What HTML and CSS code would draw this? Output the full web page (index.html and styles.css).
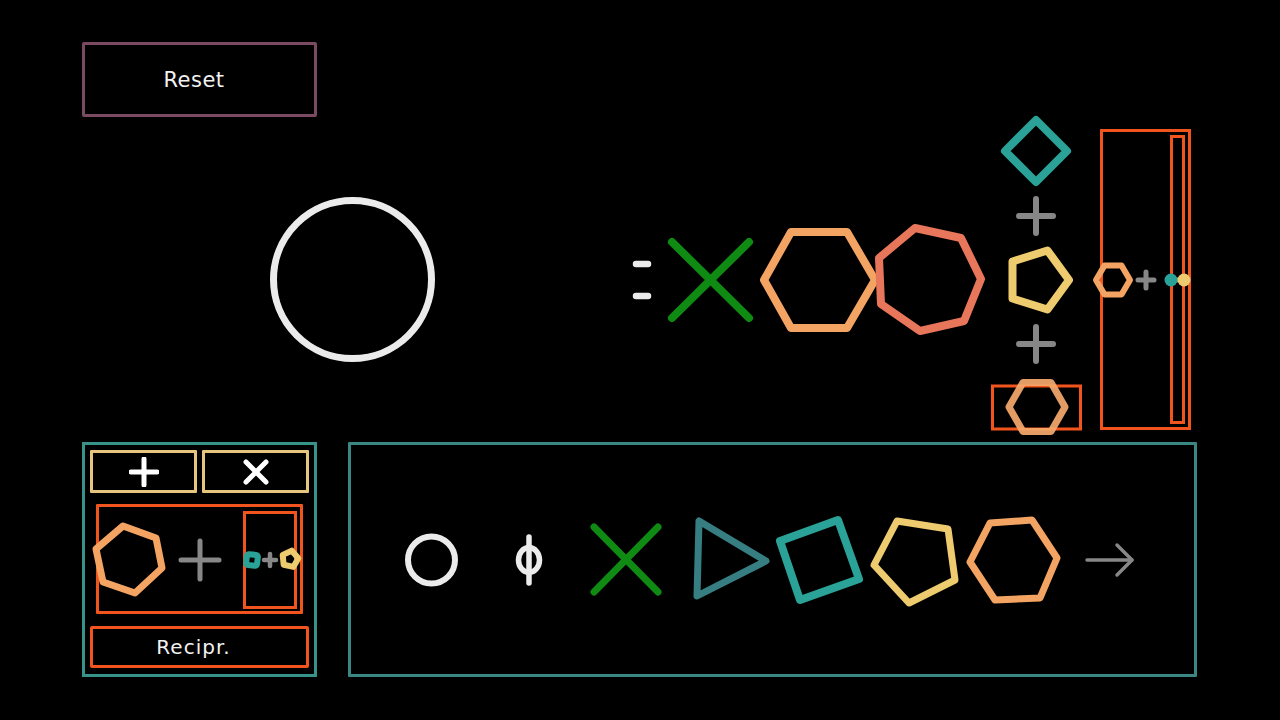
FILE: index.html
```html
<!DOCTYPE html>
<html>
<head>
<meta charset="utf-8">
<link rel="stylesheet" href="styles.css">
</head>
<body>
<div class="app">
  <div class="top">
    <button class="reset">Reset</button>
  </div>

  <svg class="diagram" viewBox="82 117 1115 325" width="1115" height="325">
    <circle class="s-white" cx="352.5" cy="279.5" r="79" stroke-width="7"/>
    <line class="s-white" x1="636" y1="264" x2="648" y2="264" stroke-width="6.5"/>
    <line class="s-white" x1="636" y1="296" x2="648" y2="296" stroke-width="6.5"/>
    <line class="s-green" x1="672" y1="242" x2="749" y2="318" stroke-width="8"/>
    <line class="s-green" x1="749" y1="242" x2="672" y2="318" stroke-width="8"/>
    <polygon class="s-orange" points="875,280 847,232 791,232 764,280 791,328 847,328" stroke-width="8"/>
    <polygon class="s-salmon" points="915,228 961,238 981,279 964,321 920,331 881,304 879,258" stroke-width="8"/>
    <polygon class="s-teal" points="1036,120 1067,151 1036,182 1005,151" stroke-width="8"/>
    <g class="s-gray" stroke-width="6">
      <line x1="1019" y1="216" x2="1053" y2="216"/>
      <line x1="1036" y1="199" x2="1036" y2="233"/>
      <line x1="1019" y1="344" x2="1053" y2="344"/>
      <line x1="1036" y1="327" x2="1036" y2="361"/>
    </g>
    <polygon class="s-yellow" points="1069,280 1047.5,309.5 1012.5,298.5 1012.5,261.5 1047.5,250.5" stroke-width="8"/>
    <rect class="s-red" x="992.5" y="386" width="88" height="43" stroke-width="3"/>
    <polygon class="s-orange-l" points="1065,407 1051,382.5 1023,382.5 1009,407 1023,431.5 1051,431.5" stroke-width="7"/>
    <rect class="s-red" x="1101.5" y="130.5" width="88" height="298" stroke-width="3"/>
    <rect class="s-red" x="1171.5" y="136.5" width="12" height="286" stroke-width="3"/>
    <polygon class="s-orange" points="1130,280 1121.5,265.5 1104.5,265.5 1096,280 1104.5,294.5 1121.5,294.5" stroke-width="6"/>
    <g class="s-gray" stroke-width="5">
      <line x1="1138" y1="280" x2="1154" y2="280"/>
      <line x1="1146" y1="272" x2="1146" y2="288"/>
      <line x1="1172" y1="280" x2="1184" y2="280"/>
    </g>
    <circle class="f-teal" cx="1171" cy="280" r="6.5"/>
    <circle class="f-yellow" cx="1184" cy="280" r="6.5"/>
  </svg>

  <div class="bottom">
    <div class="ops">
      <button class="op">
        <svg viewBox="0 0 30 30" width="30" height="30"><g class="s-white-b" stroke-width="5"><line x1="2" y1="15" x2="28" y2="15"/><line x1="15" y1="2" x2="15" y2="28"/></g></svg>
      </button>
      <button class="op">
        <svg viewBox="0 0 30 30" width="30" height="30"><g class="s-white-b" stroke-width="5"><line x1="5" y1="5" x2="25" y2="25"/><line x1="25" y1="5" x2="5" y2="25"/></g></svg>
      </button>
      <div class="expr">
        <svg class="expr-svg" viewBox="99 507 201 104" width="201" height="104">
          <polygon class="s-orange" points="123,526 156,538 162,568 135,593 103,582 96,549" stroke-width="7"/>
          <g class="s-gray" stroke-width="5">
            <line x1="181" y1="560" x2="219" y2="560"/>
            <line x1="200" y1="541" x2="200" y2="579"/>
          </g>
          <rect class="s-red" x="244.5" y="512.5" width="51" height="95" stroke-width="3"/>
          <rect class="s-teal" x="246.5" y="554.5" width="11" height="11" rx="2" transform="rotate(6 252 560)" stroke-width="6"/>
          <g class="s-gray" stroke-width="4.5">
            <line x1="264" y1="560" x2="276" y2="560"/>
            <line x1="270" y1="554" x2="270" y2="566"/>
          </g>
          <polygon class="s-yellow" points="290,550.5 298,556.5 295,566 285,566 282,556.5" transform="rotate(12 290 559)" stroke-width="6"/>
        </svg>
      </div>
      <button class="recipr">Recipr.</button>
    </div>

    <div class="seq">
      <svg viewBox="351 445 843 229" width="843" height="229">
        <circle class="s-white" cx="431.5" cy="560" r="23.5" stroke-width="6"/>
        <g class="s-white" stroke-width="5.5">
          <ellipse cx="529" cy="560" rx="10.5" ry="12.5"/>
          <line x1="529" y1="537" x2="529" y2="583"/>
        </g>
        <line class="s-green" x1="594" y1="527" x2="658" y2="592" stroke-width="7"/>
        <line class="s-green" x1="658" y1="527" x2="594" y2="592" stroke-width="7"/>
        <polygon class="s-dteal" points="699,521 697,596 766,561" stroke-width="7"/>
        <polygon class="s-teal" points="780,541 838,520 859,579 800,600" stroke-width="8"/>
        <polygon class="s-yellow" points="897,521 948,529 955,580 909,603 874,565" stroke-width="7"/>
        <polygon class="s-orange" points="990,523 1032,520 1057,558 1040,598 995,600 970,562" stroke-width="7"/>
        <g class="s-gray" stroke-width="3.5">
          <line x1="1087" y1="560" x2="1132" y2="560"/>
          <polyline points="1117,545 1132,560 1117,575"/>
        </g>
      </svg>
    </div>
  </div>
</div>
</body>
</html>
```
FILE: styles.css
```css
html, body {
  margin: 0;
  padding: 0;
  background: #000;
}

.app {
  width: 1280px;
  height: 720px;
  box-sizing: border-box;
  padding: 42px 0 0 82px;
  display: flex;
  flex-direction: column;
  font-family: "DejaVu Sans", "Noto Sans", sans-serif;
  color: #f2f2f2;
}

.top {
  height: 75px;
  display: flex;
}

button {
  font-family: inherit;
  color: #f2f2f2;
  background: #000;
  margin: 0;
  padding: 0;
  box-sizing: border-box;
  display: flex;
  align-items: center;
  justify-content: center;
}

.reset {
  width: 235px;
  height: 75px;
  border: 3px solid #7a4a62;
  border-radius: 2px;
  font-size: 21px;
  letter-spacing: 0.5px;
  padding-right: 11px;
}

.diagram {
  display: block;
  overflow: visible;
}

.bottom {
  display: flex;
  gap: 31px;
  height: 235px;
}

.ops {
  width: 235px;
  height: 235px;
  box-sizing: border-box;
  border: 3px solid #36938a;
  padding: 5px;
  display: grid;
  grid-template-columns: 1fr 1fr;
  grid-template-rows: 43px 110px 43px;
  column-gap: 5px;
  row-gap: 11px;
}

.op {
  border: 3px solid #e6c57f;
  border-radius: 1px;
}

.op svg {
  display: block;
  width: 30px;
  height: 30px;
}

.expr {
  grid-column: 1 / -1;
  margin: 0 6px;
  border: 3px solid #f2541e;
  border-radius: 1px;
}

.expr-svg {
  display: block;
  overflow: visible;
}

.recipr {
  grid-column: 1 / -1;
  margin-top: 1px;
  border: 3px solid #f2541e;
  border-radius: 2px;
  font-size: 20px;
  letter-spacing: 1px;
  padding-right: 12px;
}

.seq {
  width: 849px;
  height: 235px;
  box-sizing: border-box;
  border: 3px solid #3a8683;
  border-radius: 1px;
}

.seq svg {
  display: block;
}

/* stroke styles */
.s-white, .s-white-b, .s-green, .s-orange, .s-orange-l, .s-salmon,
.s-teal, .s-dteal, .s-yellow, .s-gray, .s-red {
  fill: none;
  stroke-linecap: round;
  stroke-linejoin: round;
}

.s-white { stroke: #ebebeb; }
.s-white-b { stroke: #ffffff; }
.s-green { stroke: #0f8b13; }
.s-orange { stroke: #f4a462; }
.s-orange-l { stroke: #f6aa6c; stroke-opacity: 0.92; }
.s-salmon { stroke: #e8765a; }
.s-teal { stroke: #2aa298; }
.s-dteal { stroke: #367e82; }
.s-yellow { stroke: #edcb6e; }
.s-gray { stroke: #878787; }
.s-red { stroke: #f2541e; stroke-linecap: butt; stroke-linejoin: miter; }

.f-teal { fill: #2aa298; }
.f-yellow { fill: #edcb6e; }
```
